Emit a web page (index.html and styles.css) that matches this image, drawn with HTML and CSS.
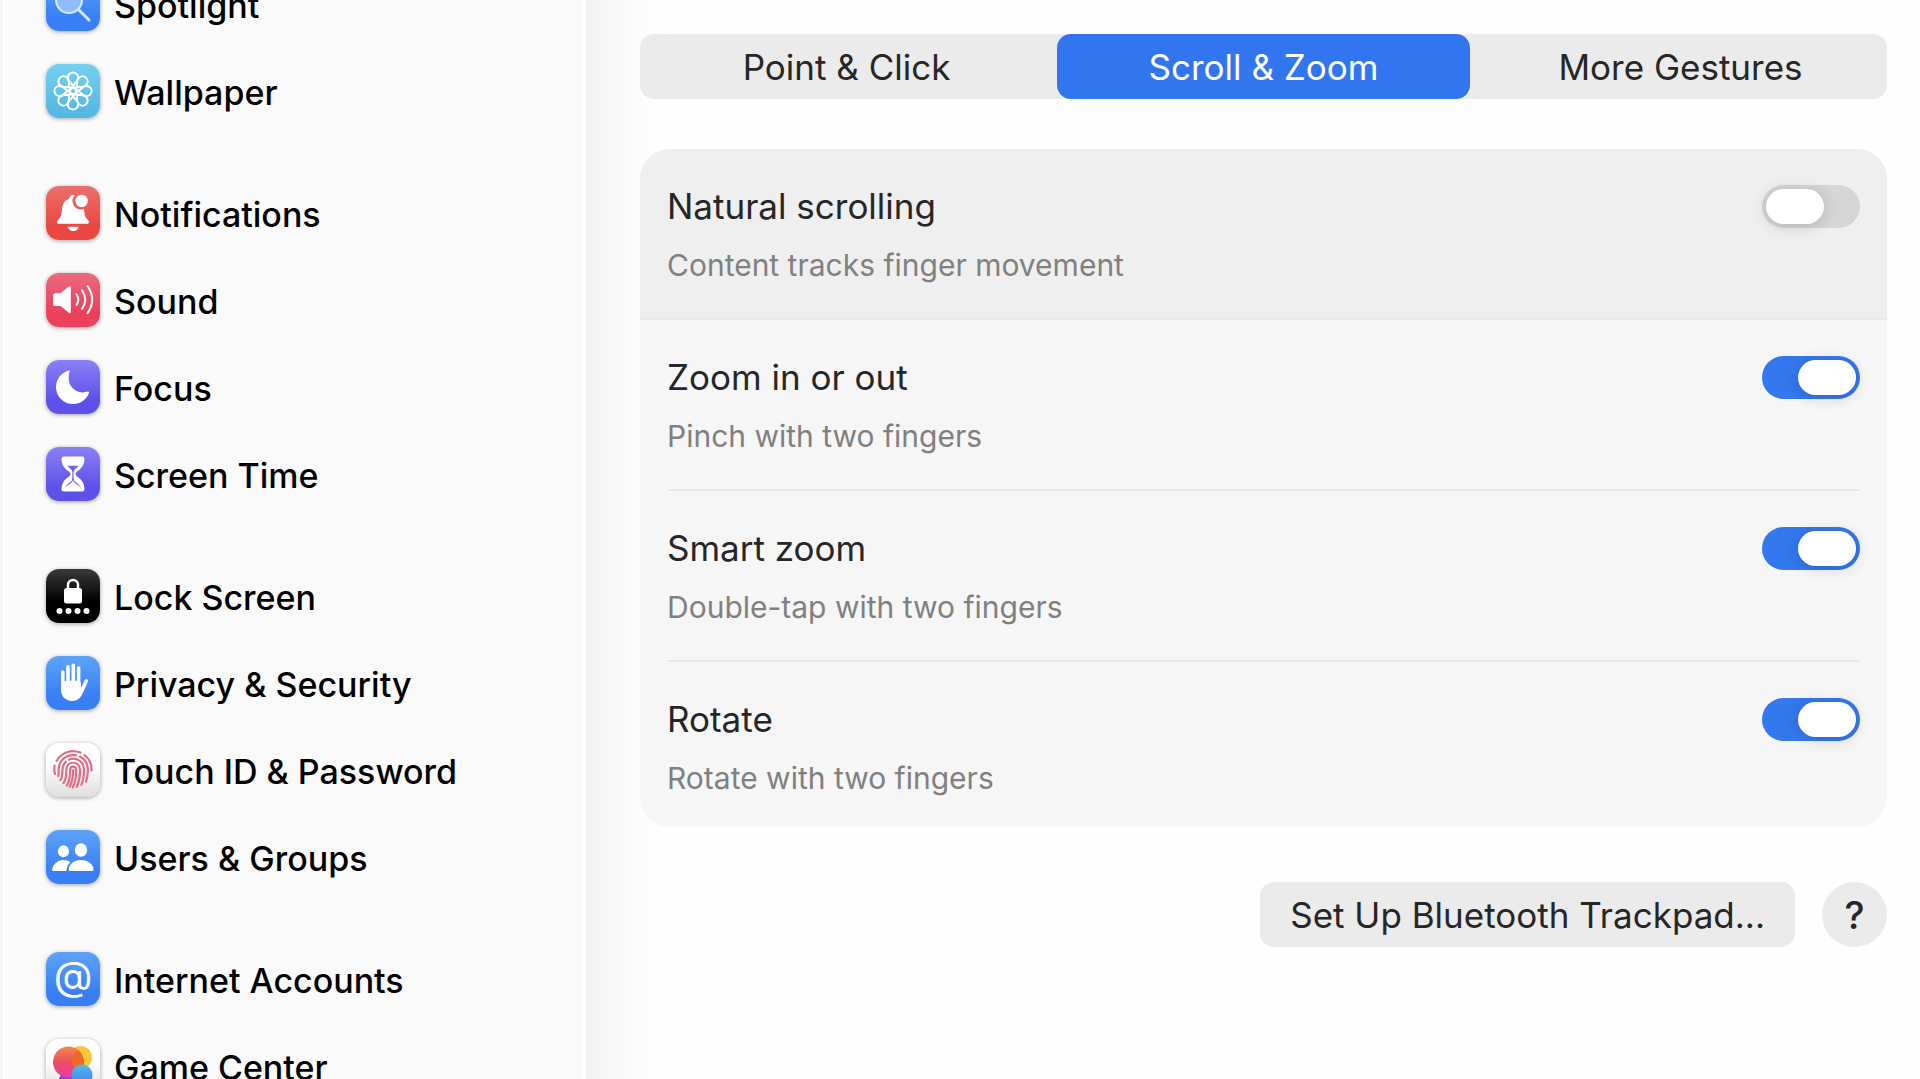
FILE: index.html
```html
<!DOCTYPE html>
<html lang="en">
<head>
    <meta charset="UTF-8">
    <meta name="viewport" content="width=device-width, initial-scale=1.0">
    <title>Trackpad</title>
    <link rel="stylesheet" href="styles.css">
</head>
<body>
    <nav class="sidebar" aria-label="Settings">
        <ul class="nav-list">
            <li>
                <a href="#spotlight" class="nav-item">
                    <svg class="icon icon-blue" viewBox="0 0 54 54" fill="none" stroke="#d4e9ff" stroke-linecap="round">
                        <circle cx="23" cy="23" r="13" fill="#8fbdfb" stroke-width="2"/>
                        <path d="M33.5 33.5 43 43" stroke-width="3"/>
                    </svg>
                    <span class="nav-label">Spotlight</span>
                </a>
            </li>
            <li>
                <a href="#wallpaper" class="nav-item">
                    <svg class="icon icon-cyan" viewBox="0 0 54 54" fill="none" stroke="#fff" stroke-width="2">
                        <defs>
                            <path id="petal" d="M28.500 24 25.300 19.500C23.200 18 21.900 16 21.900 13.500a5.100 5.100 0 0 1 10.200 0C32.100 16 30.800 18 28.700 19.500L25.500 24"/>
                        </defs>
                        <use href="#petal"/>
                        <use href="#petal" transform="rotate(45 27 27)"/>
                        <use href="#petal" transform="rotate(90 27 27)"/>
                        <use href="#petal" transform="rotate(135 27 27)"/>
                        <use href="#petal" transform="rotate(180 27 27)"/>
                        <use href="#petal" transform="rotate(225 27 27)"/>
                        <use href="#petal" transform="rotate(270 27 27)"/>
                        <use href="#petal" transform="rotate(315 27 27)"/>
                        <circle cx="27" cy="27" r="3"/>
                    </svg>
                    <span class="nav-label">Wallpaper</span>
                </a>
            </li>
        </ul>

        <ul class="nav-list">
            <li>
                <a href="#notifications" class="nav-item">
                    <svg class="icon icon-red" viewBox="0 0 54 54" fill="#fff">
                        <path d="M28.6 9.2A8.6 8.6 0 0 0 35.8 23.4C38.2 23.4 38 22.5 38.2 25c.3 4.500 1.200 6.500 3.500 8.800 1.500 1.500 2 4-.5 4H12.800c-2.500 0-2-2.500-.5-4 2.500-2.500 3.200-4.800 3.500-9.300.4-6.500 2.400-10 7-11.500.8-2.600 3-4.300 5.800-3.800z"/>
                        <circle cx="35.600" cy="15" r="6.200"/>
                        <path d="M21.500 40.800h11.500c-.8 2.800-3 4.200-5.700 4.200s-5-1.400-5.800-4.200z"/>
                    </svg>
                    <span class="nav-label">Notifications</span>
                </a>
            </li>
            <li>
                <a href="#sound" class="nav-item">
                    <svg class="icon icon-pink" viewBox="0 0 54 54" fill="#fff">
                        <path d="M9 20.200h5.500l8-6.400c1.200-1 2.300-.6 2.300.8v24.200c0 1.400-1.100 1.800-2.300.8l-8-6.600H9c-1.300 0-2-.7-2-2v-8.800c0-1.300.7-2 2-2z"/>
                        <g fill="none" stroke="#fff" stroke-width="2" stroke-linecap="round">
                            <path d="M30.500 21.200q3.500 5.400 0 10.800"/>
                            <path d="M36 17.200q6.400 9.400 0 18.800"/>
                            <path d="M41.500 13q9.400 13.500 0 27.200"/>
                        </g>
                    </svg>
                    <span class="nav-label">Sound</span>
                </a>
            </li>
            <li>
                <a href="#focus" class="nav-item">
                    <svg class="icon icon-indigo" viewBox="0 0 54 54" fill="#fff">
                        <path d="M23.300 10.500A17 17 0 1 0 43 32.800c.3-1-.4-1.600-1.400-1.200C29.500 35.500 19.500 25 23.500 11.800c.4-1.200.3-1.500-.2-1.300z"/>
                    </svg>
                    <span class="nav-label">Focus</span>
                </a>
            </li>
            <li>
                <a href="#screen-time" class="nav-item">
                    <svg class="icon icon-indigo" viewBox="0 0 54 54">
                        <path fill="#fff" d="M18 9.500h18c2.300 0 2.700 1.500 2.400 3.800-.6 5.500-3.400 8.600-7.400 11.200-2 1.400-2 3.600 0 5 4 2.600 6.800 5.700 7.400 11.200.3 2.300-.1 3.800-2.400 3.800H18c-2.300 0-2.700-1.500-2.400-3.800.6-5.500 3.400-8.600 7.400-11.200 2-1.400 2-3.600 0-5-4-2.600-6.800-5.700-7.400-11.200-.3-2.300.1-3.800 2.400-3.800z"/>
                        <path fill="#6c62ef" d="M21.500 18.800h11c-.8 1.400-2.600 2.600-4 4-.7.800-.9 2-.9 4.200 0 3.500 0 6.500 1.400 7.600 2.500 1.800 5.300 3.600 6 7.200H19c.7-3.600 3.500-5.400 6-7.200 1.400-1.100 1.400-4.100 1.400-7.600 0-2.200-.2-3.400-.9-4.200-1.400-1.400-3.200-2.600-4-4z"/>
                        <path fill="#fff" d="M18.500 42.300c1-3 3.800-4.300 6.500-6.300 1.400-1.100 1.600-2.400 2-2.400s.6 1.300 2 2.400c2.700 2 5.500 3.300 6.500 6.300z"/>
                    </svg>
                    <span class="nav-label">Screen Time</span>
                </a>
            </li>
        </ul>

        <ul class="nav-list">
            <li>
                <a href="#lock-screen" class="nav-item">
                    <svg class="icon icon-black" viewBox="0 0 54 54" fill="#fff">
                        <path d="M22 21v-5a5 5 0 0 1 10 0v5" fill="none" stroke="#fff" stroke-width="2.400"/>
                        <rect x="18" y="19" width="18" height="15.500" rx="2.500"/>
                        <circle cx="13.500" cy="42" r="3"/>
                        <circle cx="22.500" cy="42" r="3"/>
                        <circle cx="31.500" cy="42" r="3"/>
                        <circle cx="40.500" cy="42" r="3"/>
                    </svg>
                    <span class="nav-label">Lock Screen</span>
                </a>
            </li>
            <li>
                <a href="#privacy" class="nav-item">
                    <svg class="icon icon-blue" viewBox="0 0 54 54" fill="none" stroke="#fff" stroke-width="3.600" stroke-linecap="round">
                        <path d="M16.800 16v14M22 10.800V28M27.300 9.300V28M32.600 12V28M40.300 25l-4.500 10"/>
                        <path d="M15 27c5-3 14-3 19.400-1l1 6.500 3.600-2.500-2.200 6.500C35 42 31.500 45 26.500 45 19 45 15 40 15 33.500z" fill="#fff" stroke="none"/>
                    </svg>
                    <span class="nav-label">Privacy &amp; Security</span>
                </a>
            </li>
            <li>
                <a href="#touch-id" class="nav-item">
                    <svg class="icon icon-white" viewBox="0 0 54 54" fill="none" stroke="#df6f86" stroke-width="2.200" stroke-linecap="round">
                        <path d="M10.500 18A19 19 0 0 1 34.500 9.600M38.500 12A19 19 0 0 1 45.600 27.500M8.600 22.500a19 19 0 0 0 .4 8.500"/>
                        <path d="M12 33c1.200-2 .5-4.500.6-7A14.500 14.500 0 0 1 30 12.400M34 13.600a14.500 14.500 0 0 1 7.800 12.600c.2 4.500-.3 8.500-1.800 12.500"/>
                        <path d="M14.500 37c2.200-3.500 1.800-7 2-11a10.800 10.800 0 0 1 3.300-7.300M23 16.600c7.500-3 14.700 2 15 9.400.3 6-.6 11-2.600 15.800"/>
                        <path d="M17.500 40.200c3-4.500 2.800-9 2.900-13.700.2-9 13-9 13.600 0 .3 6-.8 12-3.200 17.300"/>
                        <path d="M20.800 42.600c3.400-5.500 3.300-10.500 3.400-16 .2-4 5.700-4 5.900 0 .3 6.400-.9 12.500-3.400 18"/>
                        <path d="M27.200 27c.2 6-1 11.500-3.400 16.800"/>
                    </svg>
                    <span class="nav-label">Touch ID &amp; Password</span>
                </a>
            </li>
            <li>
                <a href="#users" class="nav-item">
                    <svg class="icon icon-blue" viewBox="0 0 54 54" fill="#fff">
                        <ellipse cx="17.500" cy="21.300" rx="5.500" ry="6"/>
                        <path d="M7.500 41C5.500 41 6 38.500 6.800 37c2-4.200 6-7 10.700-7 2.700 0 5 .8 6.800 2.200-2.400 2.200-4 5.600-3.800 8.800z"/>
                        <ellipse cx="35" cy="20" rx="6.200" ry="6.800"/>
                        <path d="M24.200 41c-1.600 0-1.800-1.600-1.300-3.200C24.400 33 29.200 30 35 30s10.800 3 12.400 7.800c.5 1.600.3 3.200-1.300 3.200z"/>
                    </svg>
                    <span class="nav-label">Users &amp; Groups</span>
                </a>
            </li>
        </ul>

        <ul class="nav-list">
            <li>
                <a href="#accounts" class="nav-item">
                    <svg class="icon icon-blue" viewBox="0 0 54 54" aria-hidden="true">
                        <text class="at-sign" x="27" y="38" text-anchor="middle">@</text>
                    </svg>
                    <span class="nav-label">Internet Accounts</span>
                </a>
            </li>
            <li>
                <a href="#game-center" class="nav-item">
                    <svg class="icon icon-white" viewBox="0 0 54 54">
                        <defs>
                            <linearGradient id="bubble-red" x1="0" y1="0" x2="0" y2="1">
                                <stop offset="0" stop-color="#f08a4b"/>
                                <stop offset="0.500" stop-color="#ea4f62"/>
                                <stop offset="1" stop-color="#ea3aa0"/>
                            </linearGradient>
                            <linearGradient id="bubble-blue" x1="0" y1="0" x2="0" y2="1">
                                <stop offset="0" stop-color="#55b9e8"/>
                                <stop offset="1" stop-color="#3f7bf5"/>
                            </linearGradient>
                        </defs>
                        <circle cx="20.500" cy="41" r="7.500" fill="#8a3ff0"/>
                        <circle cx="34.500" cy="18.500" r="11.500" fill="#f9c63c"/>
                        <circle cx="22.500" cy="23" r="15.500" fill="url(#bubble-red)"/>
                        <path d="M32.500 11A11.500 11.500 0 0 0 28 28a11.500 11.500 0 0 0 9-4A15.500 15.500 0 0 0 32.500 11z" fill="#ee6a26"/>
                        <circle cx="36" cy="36" r="10.500" fill="url(#bubble-blue)"/>
                    </svg>
                    <span class="nav-label">Game Center</span>
                </a>
            </li>
        </ul>
    </nav>

    <main class="content">
        <div class="tabs" role="tablist">
            <button type="button" class="tab" role="tab" aria-selected="false">Point &amp; Click</button>
            <button type="button" class="tab active" role="tab" aria-selected="true">Scroll &amp; Zoom</button>
            <button type="button" class="tab" role="tab" aria-selected="false">More Gestures</button>
        </div>

        <div class="card">
            <div class="setting highlighted">
                <div class="setting-body">
                    <label class="setting-text" for="natural">
                        <span class="setting-title">Natural scrolling</span>
                        <span class="setting-desc">Content tracks finger movement</span>
                    </label>
                    <input type="checkbox" class="toggle" id="natural">
                </div>
            </div>
            <div class="setting">
                <div class="setting-body">
                    <label class="setting-text" for="zoom">
                        <span class="setting-title">Zoom in or out</span>
                        <span class="setting-desc">Pinch with two fingers</span>
                    </label>
                    <input type="checkbox" class="toggle" id="zoom" checked>
                </div>
            </div>
            <div class="setting">
                <div class="setting-body">
                    <label class="setting-text" for="smart-zoom">
                        <span class="setting-title">Smart zoom</span>
                        <span class="setting-desc">Double-tap with two fingers</span>
                    </label>
                    <input type="checkbox" class="toggle" id="smart-zoom" checked>
                </div>
            </div>
            <div class="setting">
                <div class="setting-body">
                    <label class="setting-text" for="rotate">
                        <span class="setting-title">Rotate</span>
                        <span class="setting-desc">Rotate with two fingers</span>
                    </label>
                    <input type="checkbox" class="toggle" id="rotate" checked>
                </div>
            </div>
        </div>

        <div class="actions">
            <button type="button" class="btn">Set Up Bluetooth Trackpad...</button>
            <button type="button" class="btn btn-help" aria-label="Help">?</button>
        </div>
    </main>
</body>
</html>
```
FILE: styles.css
```css
* {
    margin: 0;
    padding: 0;
    box-sizing: border-box;
}

body {
    display: flex;
    height: 100vh;
    overflow: hidden;
    background-color: #fefefe;
    color: #262626;
    font-family: Inter, "Liberation Sans", sans-serif;
    font-size: 35px;
    line-height: 44px;
}

button {
    border: none;
    background: none;
    color: inherit;
    font: inherit;
    cursor: pointer;
}

/* Sidebar */
.sidebar {
    flex: none;
    width: 586px;
    border-left: 3px solid #f5f5f5;
    box-shadow: inset 2px 0 #fff, inset -3px 0 #fff;
    background-color: #fafafa;
    font-size: 34px;
    font-weight: 500;
    overflow: hidden;
}

.nav-list {
    list-style: none;
    padding: 0 24px 0 43px;
    margin-bottom: 35px;
}

/* the list is scrolled part of a row down */
.nav-list:first-child {
    margin-top: -40px;
}

.nav-item {
    display: flex;
    align-items: center;
    gap: 14px;
    height: 87px;
    color: #000;
    text-decoration: none;
    white-space: nowrap;
}

.nav-label {
    padding-top: 4px;
}

.icon {
    flex: none;
    width: 54px;
    height: 54px;
    border-radius: 13px;
    box-shadow: 0 1px 4px rgba(0, 0, 0, 0.35);
}

.icon-blue {
    background: linear-gradient(#5ea3f7, #387ff6 75%);
}

.icon-cyan {
    background: linear-gradient(#75d0f0, #50b6e2);
}

.icon-red {
    background: linear-gradient(#eb706c, #ea4741 75%);
}

.icon-pink {
    background: linear-gradient(#eb6a80, #ea405a 75%);
}

.icon-indigo {
    background: linear-gradient(#8c7ff6, #5d51e9 75%);
}

.icon-black {
    background: linear-gradient(#3a3a3a, #000 60%);
}

.icon-white {
    background: linear-gradient(#fff 40%, #dedede);
}

.at-sign {
    fill: #fff;
    font-size: 40px;
    font-weight: 400;
}

/* Content */
.content {
    flex: 1;
    min-width: 0;
    padding: 34px 33px 0 54px;
    background: linear-gradient(to right, #f2f2f2, #fbfbfb 45px, #fefefe 80px);
}

.tabs {
    display: grid;
    grid-template-columns: repeat(3, 1fr);
    gap: 4px;
    border-radius: 14px;
    background-color: #ebebeb;
}

.tab {
    height: 65px;
    border-radius: 14px;
}

.tab.active {
    background-color: #3176ef;
    color: #fff;
}

.card {
    margin-top: 50px;
    border-radius: 30px;
    background-color: #f6f6f6;
    overflow: hidden;
}

.setting {
    padding: 0 27px;
}

.setting.highlighted {
    background-color: #efefef;
    border-bottom: 2px solid #e9e9e9;
}

.setting-body {
    display: flex;
    justify-content: space-between;
    align-items: center;
    padding: 35px 0 34px;
}

.setting:not(.highlighted):not(:last-child) .setting-body {
    border-bottom: 2px solid #e9e9e9;
}

.setting:last-child .setting-body {
    padding-bottom: 30px;
}

.setting-text {
    display: flex;
    flex-direction: column;
    gap: 18px;
}

.setting-desc {
    color: #808080;
    font-size: 30px;
    line-height: 38px;
}

.toggle {
    appearance: none;
    align-self: flex-start;
    width: 98px;
    height: 43px;
    padding: 4px;
    margin-top: 1px;
    border-radius: 22px;
    background-color: #d6d6d6;
    cursor: pointer;
}

.toggle::before {
    content: "";
    display: block;
    width: 58px;
    height: 35px;
    border-radius: 18px;
    background-color: #fff;
    box-shadow: 0 2px 16px rgba(0, 0, 0, 0.16);
}

.toggle:checked {
    background-color: #3478f0;
}

.toggle:checked::before {
    margin-left: auto;
}

.actions {
    display: flex;
    justify-content: flex-end;
    gap: 27px;
    margin-top: 55px;
}

.btn {
    height: 65px;
    padding: 0 30px;
    border-radius: 14px;
    background-color: #ebebeb;
}

.btn-help {
    width: 65px;
    padding: 0;
    border-radius: 50%;
    font-size: 38px;
    font-weight: 500;
}
```
